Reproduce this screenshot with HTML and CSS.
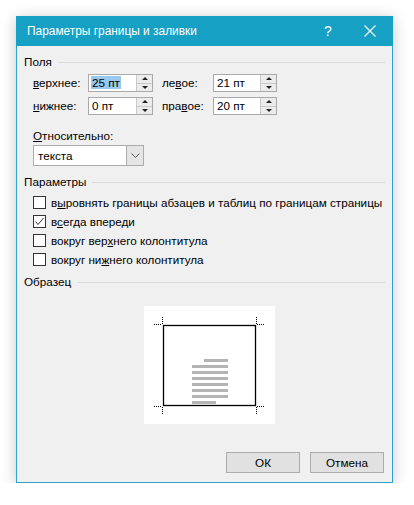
FILE: index.html
```html
<!DOCTYPE html>
<html lang="ru">
<head>
<meta charset="utf-8">
<title>Параметры границы и заливки</title>
<link rel="stylesheet" href="styles.css">
</head>
<body>
<div class="dialog">
  <div class="titlebar">
    <span class="title">Параметры границы и заливки</span>
    <span class="help">?</span>
    <span class="close"><svg width="12" height="12" viewBox="0 0 12 12"><path d="M0.5 0.5L11.5 11.5M11.5 0.5L0.5 11.5" stroke="#fff" stroke-width="1.1" fill="none"/></svg></span>
  </div>
  <div class="body">
    <div class="group-head"><span>Поля</span><i class="rule"></i></div>
    <div class="fields">
      <span class="lbl"><u>в</u>ерхнее:</span>
      <div class="spin"><span class="val"><span class="sel">25 пт</span></span><span class="arrows"><b class="up"></b><b class="down"></b></span></div>
      <span class="lbl lbl2">ле<u>в</u>ое:</span>
      <div class="spin"><span class="val">21 пт</span><span class="arrows"><b class="up"></b><b class="down"></b></span></div>
      <span class="lbl"><u>н</u>ижнее:</span>
      <div class="spin"><span class="val">0 пт</span><span class="arrows"><b class="up"></b><b class="down"></b></span></div>
      <span class="lbl lbl2">пра<u>в</u>ое:</span>
      <div class="spin"><span class="val">20 пт</span><span class="arrows"><b class="up"></b><b class="down"></b></span></div>
    </div>
    <div class="rel-label"><u>О</u>тносительно:</div>
    <div class="combo"><span class="val">текста</span><span class="drop"><svg width="9" height="5" viewBox="0 0 9 5"><path d="M0.5 0.5L4.5 4.5L8.5 0.5" stroke="#555" fill="none"/></svg></span></div>

    <div class="group-head g2"><span>Параметры</span><i class="rule"></i></div>
    <ul class="checks">
      <li><span class="cb"></span><span class="txt">в<u>ы</u>ровнять границы абзацев и таблиц по границам страницы</span></li>
      <li><span class="cb"><svg width="11" height="11" viewBox="0 0 11 11"><path d="M1.5 5.5L4 8.5L9.8 1.8" stroke="#333" stroke-width="1" fill="none"/></svg></span><span class="txt">в<u>с</u>егда впереди</span></li>
      <li><span class="cb"></span><span class="txt">вокруг вер<u>х</u>него колонтитула</span></li>
      <li><span class="cb"></span><span class="txt">вокруг ни<u>ж</u>него колонтитула</span></li>
    </ul>

    <div class="group-head g3"><span>Образец</span><i class="rule"></i></div>
    <div class="preview">
      <svg width="131" height="118" viewBox="0 0 131 118">
        <rect x="19.5" y="19.5" width="92" height="80" fill="#fff" stroke="#000" stroke-width="1.3"/>
        <g stroke="#000" stroke-width="1" stroke-dasharray="1 1">
          <path d="M10 18.5H18 M18.5 11V18"/>
          <path d="M113 18.5H121 M112.5 11V18"/>
          <path d="M10 100.5H18 M18.5 101V108"/>
          <path d="M113 100.5H121 M112.5 101V108"/>
        </g>
        <g fill="#b4b4b4">
          <rect x="60" y="53" width="24" height="3"/>
          <rect x="48" y="59" width="36" height="3"/>
          <rect x="48" y="65" width="36" height="3"/>
          <rect x="48" y="71" width="36" height="3"/>
          <rect x="48" y="77" width="36" height="3"/>
          <rect x="48" y="83" width="36" height="3"/>
          <rect x="48" y="89" width="36" height="3"/>
          <rect x="48" y="95" width="24" height="3"/>
        </g>
      </svg>
    </div>

    <div class="buttons">
      <button class="btn">ОК</button>
      <button class="btn">Отмена</button>
    </div>
  </div>
</div>
</body>
</html>
```

FILE: styles.css
```css
html, body {
  margin: 0;
  padding: 0;
  background: #fff;
}
body {
  padding: 16px 0 0 16px;
  font-family: "Liberation Sans", "Noto Sans", sans-serif;
  font-size: 11.7px;
  color: #000;
}
.dialog {
  width: 375px;
  height: 466px;
  border: 1px solid #2ea3c9;
  border-top: 0;
  background: #f0f0f0;
  box-shadow: 0 2px 14px rgba(0,0,0,0.22);
  display: flex;
  flex-direction: column;
}
.titlebar {
  height: 30px;
  margin: 0 -1px;
  background: #16a0c4;
  color: #fff;
  display: flex;
  align-items: center;
  font-size: 11.9px;
}
.title {
  padding-left: 11px;
  flex: 1;
  white-space: nowrap;
}
.help {
  width: 20px;
  text-align: center;
  margin-right: 26px;
  font-size: 14px;
}
.close {
  width: 12px;
  height: 12px;
  margin-right: 17px;
  display: flex;
}
.body {
  flex: 1;
  padding: 8px 7px 0 7px;
  display: flex;
  flex-direction: column;
}
.group-head {
  height: 16px;
  display: flex;
  align-items: center;
  line-height: 16px;
}
.group-head .rule {
  flex: 1;
  height: 1px;
  background: #dcdcdc;
  margin-left: 6px;
  margin-top: 1px;
}
.fields {
  margin: 4px 0 0 9px;
  display: grid;
  grid-template-columns: 55px 65px 60px 64px;
  grid-auto-rows: 18px;
  row-gap: 5px;
  align-items: center;
}
.lbl { line-height: 16px; white-space: nowrap; }
.lbl2 { padding-left: 9px; }
.spin {
  height: 18px;
  box-sizing: border-box;
  border: 1px solid #a9a9a9;
  background: #fff;
  display: flex;
}
.spin .val {
  flex: 1;
  padding-left: 3px;
  line-height: 16px;
}
.sel {
  background: #99c9ef;
  padding: 0 1px;
  margin-left: -1px;
}
.arrows {
  width: 15px;
  border-left: 1px solid #c9c9c9;
  display: flex;
  flex-direction: column;
  background: #ececec;
}
.arrows b {
  flex: 1;
  display: flex;
  align-items: center;
  justify-content: center;
}
.arrows b.up { border-bottom: 1px solid #c9c9c9; }
.arrows b.up::before {
  content: "";
  border-left: 3px solid transparent;
  border-right: 3px solid transparent;
  border-bottom: 3px solid #222;
}
.arrows b.down::before {
  content: "";
  border-left: 3px solid transparent;
  border-right: 3px solid transparent;
  border-top: 3px solid #222;
}
.rel-label {
  margin: 13px 0 0 9px;
  line-height: 16px;
  height: 16px;
}
.combo {
  margin: 1px 0 0 9px;
  width: 111px;
  height: 21px;
  box-sizing: border-box;
  border: 1px solid #acacac;
  background: #fff;
  display: flex;
}
.combo .val {
  flex: 1;
  padding-left: 4px;
  line-height: 19px;
}
.drop {
  width: 16px;
  background: #e5e5e5;
  border-left: 1px solid #acacac;
  display: flex;
  align-items: center;
  justify-content: center;
}
.g2 { margin-top: 8px; }
.checks {
  list-style: none;
  margin: 3px 0 0 9px;
  padding: 0;
}
.checks li {
  height: 19px;
  display: flex;
  align-items: center;
}
.txt { white-space: nowrap; }
.cb {
  width: 13px;
  height: 13px;
  flex: none;
  box-sizing: border-box;
  border: 1px solid #333;
  background: #fff;
  margin-right: 5px;
  display: flex;
  align-items: center;
  justify-content: center;
}
.g3 { margin-top: 5px; }
.preview {
  margin: 16px 0 0 120px;
  width: 131px;
  height: 118px;
  background: #fff;
}
.preview svg { display: block; }
.buttons {
  margin-top: 28px;
  display: flex;
  justify-content: flex-end;
  gap: 10px;
  padding-right: 1px;
}
.btn {
  width: 74px;
  height: 21px;
  box-sizing: border-box;
  border: 1px solid #adadad;
  background: #e1e1e1;
  font-family: inherit;
  font-size: 11.7px;
  color: #000;
  padding: 0;
}
u { text-decoration: underline; text-underline-offset: 1px; }
```
